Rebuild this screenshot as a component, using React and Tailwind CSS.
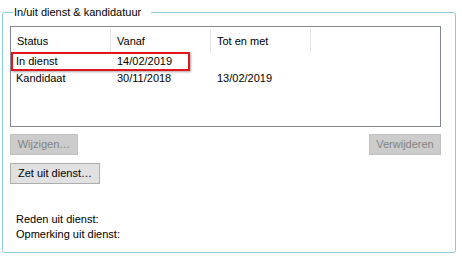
export default function App() {
  const rows = [
    ["In dienst", "14/02/2019", ""],
    ["Kandidaat", "30/11/2018", "13/02/2019"],
  ];

  return (
    <div className="w-[462px] h-[256px] bg-white pl-[2px] pt-[5px] font-['Liberation_Sans',Arial,sans-serif] text-[11px] text-black">
      <fieldset className="w-[454px] h-[248px] border border-[#88cdd8] rounded-[3px] pl-[7px] pr-[14px]">
        <legend className="ml-[3px] pl-[1px] pr-[10px] leading-[14px]">
          In/uit dienst &amp; kandidatuur
        </legend>

        {/* list view */}
        <div className="relative mt-[7px] w-[431px] h-[101px] border border-[#828790] bg-white">
          <div className="flex h-[26px] pt-[2px]">
            <div className="w-[100px] h-[24px] border-r border-[#e5e5e5] pl-[6px] flex items-center">Status</div>
            <div className="w-[100px] h-[24px] border-r border-[#e5e5e5] pl-[6px] flex items-center">Vanaf</div>
            <div className="w-[100px] h-[24px] border-r border-[#e5e5e5] pl-[6px] flex items-center">Tot en met</div>
          </div>
          {rows.map((r) => (
            <div key={r[0]} className="flex h-[17px] items-center">
              <div className="w-[100px] pl-[5px]">{r[0]}</div>
              <div className="w-[100px] pl-[6px]">{r[1]}</div>
              <div className="w-[100px] pl-[6px]">{r[2]}</div>
            </div>
          ))}
          {/* highlight annotation */}
          <div className="absolute left-0 top-[25px] w-[179px] h-[19px] border-2 border-[#e3141c] shadow-[1px_1px_2px_rgba(0,0,0,0.35)]" />
        </div>

        <div className="mt-[7px] w-[431px] flex justify-between">
          <button className="w-[68px] h-[21px] border border-[#bfbfbf] bg-[#cccccc] text-[#838383]">Wijzigen…</button>
          <button className="w-[72px] h-[21px] border border-[#bfbfbf] bg-[#cccccc] text-[#838383]">Verwijderen</button>
        </div>

        <button className="mt-[8px] w-[90px] h-[21px] border border-[#adadad] bg-[#e1e1e1]">Zet uit dienst…</button>

        <div className="mt-[28px] pl-[6px] leading-[15px]">
          <div>Reden uit dienst:</div>
          <div>Opmerking uit dienst:</div>
        </div>
      </fieldset>
    </div>
  );
}
